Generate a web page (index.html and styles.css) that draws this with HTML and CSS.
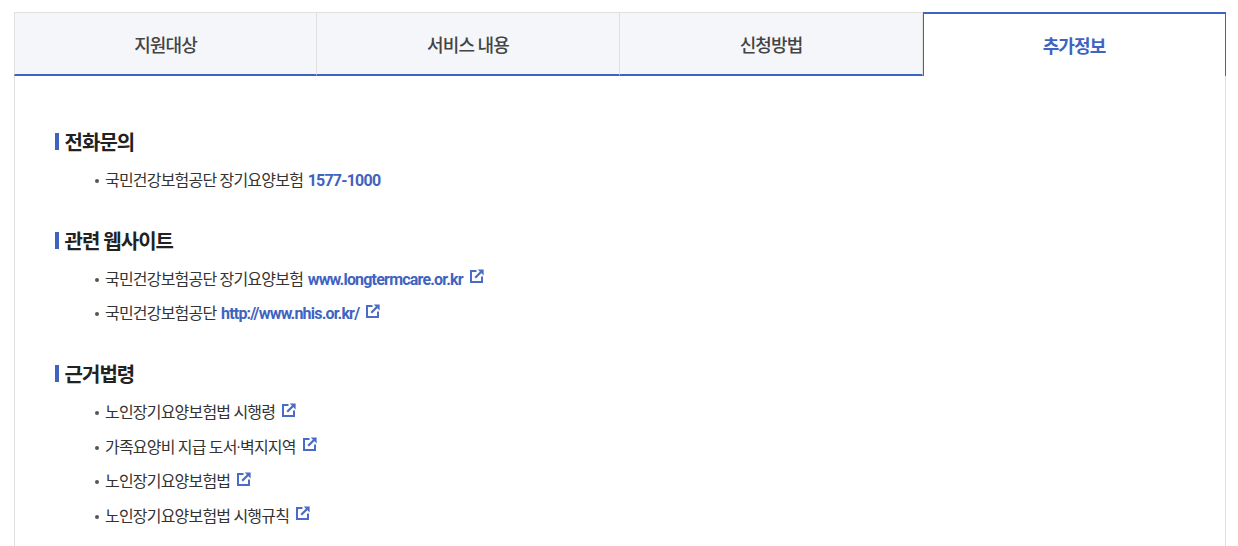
FILE: index.html
```html
<!DOCTYPE html>
<html lang="ko">
<head>
<meta charset="utf-8">
<title>추가정보</title>
<link rel="stylesheet" href="styles.css">
</head>
<body>
<svg class="defs" width="0" height="0" aria-hidden="true">
  <symbol id="ext" viewBox="0 0 14 14">
    <path d="M6.5 2H1v11h11V7.5" fill="none" stroke="currentColor" stroke-width="2"/>
    <path d="M5.2 8.8 11 3" fill="none" stroke="currentColor" stroke-width="2.2"/>
    <path d="M7.8 .6h5.8v5.8z" fill="currentColor"/>
  </symbol>
</svg>
<main class="wrap">
  <nav class="tabs">
    <a class="tab">지원대상</a>
    <a class="tab">서비스 내용</a>
    <a class="tab">신청방법</a>
    <a class="tab active">추가정보</a>
  </nav>
  <div class="panel">
    <section class="sec">
      <h3 class="title">전화문의</h3>
      <ul class="list">
        <li>국민건강보험공단 장기요양보험 <a class="link">1577-1000</a></li>
      </ul>
    </section>
    <section class="sec">
      <h3 class="title">관련 웹사이트</h3>
      <ul class="list">
        <li>국민건강보험공단 장기요양보험 <a class="link">www.longtermcare.or.kr</a><svg class="ico"><use href="#ext"/></svg></li>
        <li>국민건강보험공단 <a class="link">http://www.nhis.or.kr/</a><svg class="ico"><use href="#ext"/></svg></li>
      </ul>
    </section>
    <section class="sec">
      <h3 class="title">근거법령</h3>
      <ul class="list">
        <li>노인장기요양보험법 시행령<svg class="ico"><use href="#ext"/></svg></li>
        <li>가족요양비 지급 도서·벽지지역<svg class="ico"><use href="#ext"/></svg></li>
        <li>노인장기요양보험법<svg class="ico"><use href="#ext"/></svg></li>
        <li>노인장기요양보험법 시행규칙<svg class="ico"><use href="#ext"/></svg></li>
      </ul>
    </section>
  </div>
</main>
</body>
</html>
```
FILE: styles.css
```css
* { box-sizing: border-box; }
html, body { margin: 0; padding: 0; background: #fff; overflow: hidden; }
body {
  height: 546px;
  font-family: Roboto, "Noto Sans CJK KR", sans-serif;
  color: #333;
}
.defs { position: absolute; }
.wrap { width: 1212px; margin: 12px 0 0 14px; }
.tabs {
  display: grid;
  grid-template-columns: repeat(4, 303px);
  height: 64px;
}
.tab {
  display: flex;
  align-items: center;
  justify-content: center;
  background: #f5f6fa;
  border-top: 1px solid #e0e0e0;
  border-right: 1px solid #e0e0e0;
  border-bottom: 2px solid #3f63c0;
  font-size: 18px;
  font-weight: 500;
  letter-spacing: -0.9px;
  color: #444;
}
.tab:first-child { border-left: 1px solid #e0e0e0; }
.tab.active {
  background: #fff;
  color: #3f63c0;
  border: 2px solid #3f63c0;
  border-width: 2px 1px 0 1px;
  font-weight: 700;
  padding-right: 1px;
}
.panel {
  border-left: 1px solid #e0e0e0;
  border-right: 1px solid #e0e0e0;
  width: 1212px;
  height: 470px;
  padding: 52px 40px 0;
}
.sec + .sec { margin-top: 30px; }
.title {
  margin: 0;
  height: 26px;
  display: flex;
  align-items: center;
  font-size: 20px;
  font-weight: 700;
  letter-spacing: -1px;
  color: #222;
}
.title::before {
  content: "";
  width: 4px;
  height: 17px;
  background: #3f63c0;
  margin-right: 5.6px;
}
.list {
  list-style: none;
  margin: 8.5px 0 0;
  padding: 0 0 0 40px;
}
.list li {
  position: relative;
  height: 34.5px;
  line-height: 35px;
  font-size: 16px;
  letter-spacing: -0.8px;
  padding-left: 10px;
  color: #333;
  white-space: nowrap;
}
.list li::before {
  content: "";
  position: absolute;
  left: 0;
  top: 16px;
  width: 4px;
  height: 4px;
  border-radius: 50%;
  background: #555;
}
.link {
  color: #3f63c0;
  font-weight: 700;
  letter-spacing: -0.8px;
  margin-left: 1.5px;
}
.ico {
  width: 14px;
  height: 14px;
  margin-left: 7px;
  vertical-align: 1.5px;
  color: #4a6cc6;
}
```
